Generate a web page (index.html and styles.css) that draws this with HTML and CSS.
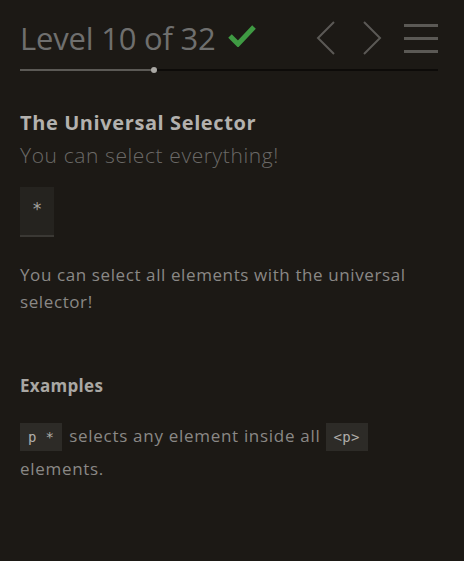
FILE: index.html
```html
<!DOCTYPE html>
<html>
<head>
<meta charset="utf-8">
<link rel="stylesheet" href="styles.css">
</head>
<body>
<div class="sidebar">
  <div class="header">
    <h1 class="level">Level 10 of 32
      <svg class="check" width="28" height="22" viewBox="0 0 28 22"><path d="M2 11 L10 19 L26 2" fill="none" stroke="#3f9a43" stroke-width="5"/></svg>
    </h1>
    <div class="nav">
      <svg class="arrow" width="20" height="34" viewBox="0 0 20 34"><path d="M18 1 L2 17 L18 33" fill="none" stroke="#5b5955" stroke-width="2"/></svg>
      <svg class="arrow" width="20" height="34" viewBox="0 0 20 34"><path d="M2 1 L18 17 L2 33" fill="none" stroke="#5b5955" stroke-width="2"/></svg>
      <div class="menu"><span></span><span></span><span></span></div>
    </div>
  </div>
  <div class="progress"><div class="progress-fill" style="width:134px"></div><div class="progress-dot"></div></div>

  <h2 class="title">The Universal Selector</h2>
  <h3 class="subtitle">You can select everything!</h3>
  <div class="syntax">*</div>
  <p class="hint">You can select all elements with the universal selector!</p>

  <h4 class="examples-title">Examples</h4>
  <p class="example"><code>p *</code> selects any element inside all <code>&lt;p&gt;</code> elements.</p>
</div>
</body>
</html>
```

FILE: styles.css
```css
html, body {
  margin: 0;
  padding: 0;
  background: #1c1915;
  height: 100%;
}
body {
  font-family: "Open Sans", Lato, sans-serif;
  color: #8a8886;
}
.sidebar {
  padding: 0 26px 0 20px;
}
.header {
  display: flex;
  align-items: center;
  justify-content: space-between;
  height: 78px;
  margin-top: -1px;
}
.level {
  margin: 0;
  font-size: 31px;
  font-weight: 400;
  color: #6f6f6e;
  display: flex;
  align-items: center;
  gap: 12px;
  letter-spacing: -0.2px;
}
.check {
  margin-top: -4px;
}
.nav {
  display: flex;
  align-items: center;
}
.arrow {
  margin-right: 26px;
  margin-left: 0;
}
.menu {
  display: flex;
  flex-direction: column;
  gap: 10px;
  width: 34px;
  margin-left: -4px;
}
.menu span {
  display: block;
  height: 3px;
  background: #5b5955;
}
.progress {
  position: relative;
  height: 2px;
  background: #0d0b09;
  margin: -8px 0 0 0;
}
.progress-fill {
  height: 2px;
  background: #5b5955;
}
.progress-dot {
  position: absolute;
  left: 131px;
  top: -2px;
  width: 6px;
  height: 6px;
  border-radius: 50%;
  background: #aaa8a4;
}
.title {
  margin: 40px 0 0 0;
  font-size: 20px;
  font-weight: 700;
  color: #b3b1ae;
  line-height: 24px;
  letter-spacing: 0.6px;
}
.subtitle {
  margin: 7px 0 0 0;
  font-size: 21px;
  font-weight: 300;
  color: #6b6967;
  line-height: 26px;
  letter-spacing: 0.6px;
}
.syntax {
  margin-top: 19px;
  width: 34px;
  height: 50px;
  box-sizing: border-box;
  background: #25231f;
  border-bottom: 2px solid #3a3834;
  color: #a3a19d;
  font-family: "DejaVu Sans Mono", monospace;
  font-size: 17px;
  display: flex;
  align-items: center;
  justify-content: center;
  padding-bottom: 4px;
}
.hint {
  margin: 24px 0 0 0;
  font-size: 17px;
  line-height: 27px;
  letter-spacing: 0.6px;
}
.examples-title {
  margin: 60px 0 0 0;
  font-size: 17px;
  font-weight: 700;
  color: #a9a7a3;
  line-height: 22px;
  letter-spacing: 0.3px;
}
.example {
  margin: 23px 0 0 0;
  font-size: 17px;
  line-height: 32px;
  letter-spacing: 0.7px;
}
.example code {
  font-family: "DejaVu Sans Mono", monospace;
  font-size: 14px;
  letter-spacing: 0.3px;
  background: #2d2b27;
  color: #b0aeaa;
  padding: 6px 8px 6px 8px;
  margin-right: 2px;
}
```
